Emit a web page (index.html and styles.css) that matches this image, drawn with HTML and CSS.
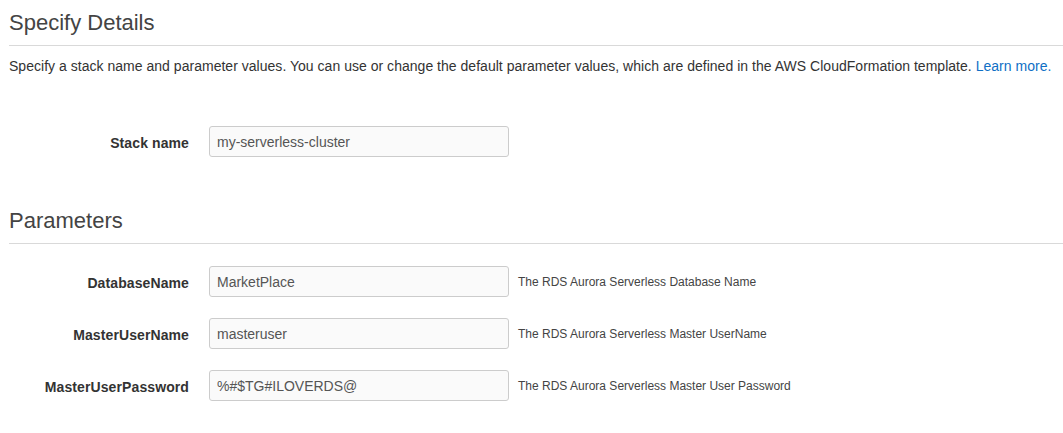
FILE: index.html
```html
<!DOCTYPE html>
<html>
<head>
<meta charset="utf-8">
<link rel="stylesheet" href="styles.css">
</head>
<body>
<div class="page">
  <h2 class="section-title">Specify Details</h2>
  <hr class="rule">
  <p class="intro">Specify a stack name and parameter values. You can use or change the default parameter values, which are defined in the AWS CloudFormation template. <a class="link" href="#">Learn more.</a></p>

  <div class="form-row stack-row">
    <label class="field-label">Stack name</label>
    <input class="field-input" type="text" value="my-serverless-cluster">
  </div>

  <h2 class="section-title params-title">Parameters</h2>
  <hr class="rule">

  <div class="params">
    <div class="form-row">
      <label class="field-label">DatabaseName</label>
      <input class="field-input" type="text" value="MarketPlace">
      <span class="help">The RDS Aurora Serverless Database Name</span>
    </div>
    <div class="form-row">
      <label class="field-label">MasterUserName</label>
      <input class="field-input" type="text" value="masteruser">
      <span class="help">The RDS Aurora Serverless Master UserName</span>
    </div>
    <div class="form-row">
      <label class="field-label">MasterUserPassword</label>
      <input class="field-input" type="text" value="%#$TG#ILOVERDS@">
      <span class="help">The RDS Aurora Serverless Master User Password</span>
    </div>
  </div>
</div>
</body>
</html>
```
FILE: styles.css
```css
html, body {
  margin: 0;
  padding: 0;
  background: #ffffff;
}

body {
  font-family: "Liberation Sans", Arial, Helvetica, sans-serif;
  color: #333333;
}

.page {
  padding: 10px 0 0 9px;
}

.section-title {
  margin: 0;
  font-size: 22px;
  line-height: 26px;
  font-weight: normal;
  color: #444444;
}

.params-title {
  margin-top: 51px;
}

.rule {
  margin: 9px 0 0 0;
  border: 0;
  height: 1px;
  background: #d9d9d9;
}

.intro {
  margin: 10px 0 0 0;
  font-size: 14px;
  line-height: 20px;
  color: #333333;
  white-space: nowrap;
  letter-spacing: 0.025px;
}

.link {
  color: #0f6fc5;
  text-decoration: none;
}

.form-row {
  display: flex;
  align-items: center;
  height: 31px;
}

.stack-row {
  margin-top: 50px;
}

.params {
  margin-top: 22px;
  display: flex;
  flex-direction: column;
  gap: 21px;
}

.field-label {
  width: 180px;
  text-align: right;
  font-size: 14px;
  font-weight: bold;
  color: #333333;
  margin-right: 20px;
  padding-top: 2px;
  letter-spacing: 0.1px;
}

.field-input {
  box-sizing: border-box;
  width: 300px;
  height: 31px;
  margin: 0;
  padding: 0 7px;
  border: 1px solid #cccccc;
  border-radius: 3px;
  background: #fafafa;
  font-family: "Liberation Sans", Arial, Helvetica, sans-serif;
  font-size: 14px;
  color: #555555;
  outline: none;
}

.help {
  margin-left: 9px;
  font-size: 12px;
  color: #444444;
}
```
